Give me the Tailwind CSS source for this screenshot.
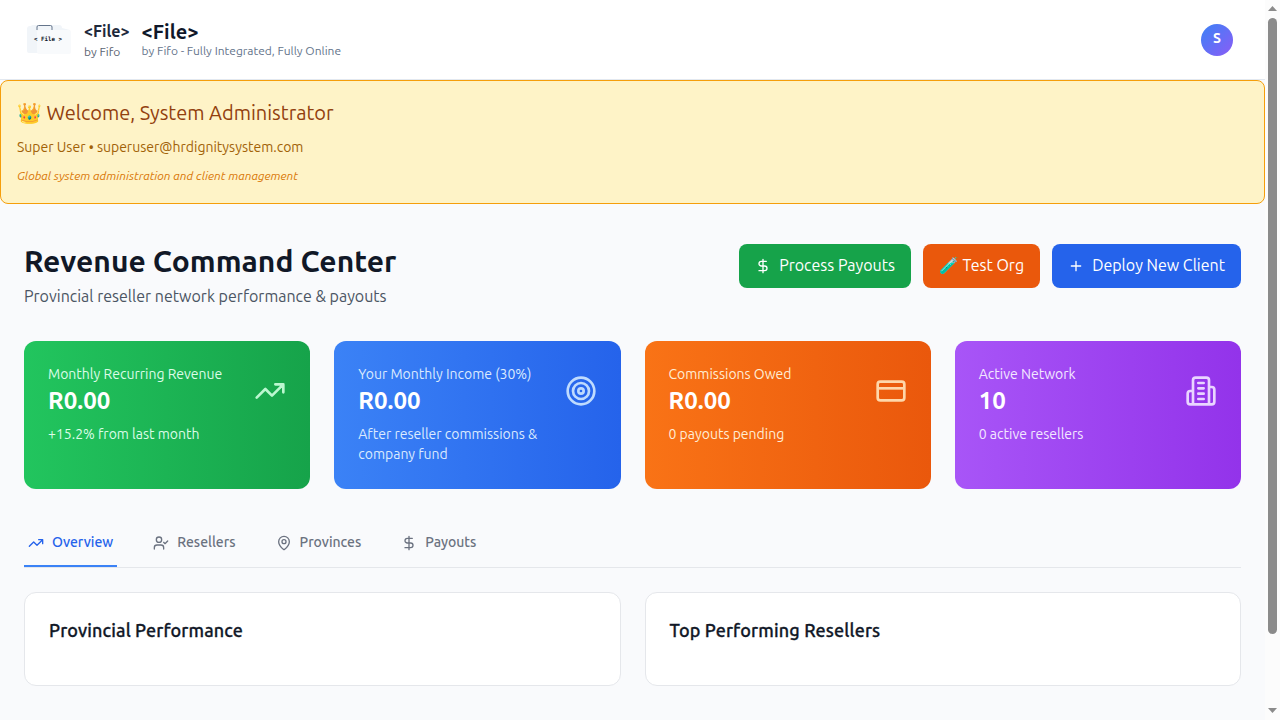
<!DOCTYPE html>
<html lang="en">
<head>
<meta charset="utf-8">
<title>Revenue Command Center</title>
<script src="https://cdn.jsdelivr.net/npm/@tailwindcss/browser@4"></script>
</head>
<body class="flex h-[720px] w-[1280px] overflow-hidden bg-[#f9fafb] font-[Ubuntu,'Noto_Sans',sans-serif] text-gray-900">
<div class="w-[1265px] shrink-0 bg-[#f9fafc]">
  <header class="flex h-20 items-center justify-between border-b border-[#e2e8f0] bg-white pl-6 pr-8">
    <div class="flex items-center">
      <svg class="h-12 w-12" viewBox="0 0 48 48" fill="none">
        <path d="M3 13q0-3 3-3h1l1-1h27q3 0 3 3l8 2v21q0 2-2 2H5q-2 0-2-2z" fill="#f1f5f9"/>
        <path d="M13 15l2-1h30q2 0 2 2v20q0 2-2 2H15q-2 0-2-2z" fill="#f8fafc"/>
        <path d="M13 14v-3q0-1.500 1.500-1.500h12q1.500 0 1.500 1.500v3" stroke="#64748b" stroke-width="1"/>
        <text x="24" y="25" text-anchor="middle" font-family="DejaVu Sans Mono, monospace" font-weight="700" font-size="5.800" fill="#0f172a">&lt; File &gt;</text>
      </svg>
      <div class="ml-3 pt-[2px]">
        <div class="text-[16px] font-bold leading-[20px] text-[#1e293b]">&lt;File&gt;</div>
        <div class="mt-[2px] text-xs leading-[18px] text-[#5b6472]">by Fifo</div>
      </div>
      <div class="ml-3 pb-[2px]">
        <div class="text-xl font-bold leading-6 text-[#0f172a]">&lt;File&gt;</div>
        <div class="text-xs leading-[14px] text-[#64748b]">by Fifo - Fully Integrated, Fully Online</div>
      </div>
    </div>
    <div class="flex size-8 items-center justify-center rounded-full bg-[linear-gradient(135deg,#3b82f6,#8b5cf6)] pb-1 text-sm font-bold text-white">S</div>
  </header>

  <section class="h-[124px] rounded-lg border border-[#f59e0b] bg-[#fef3c7] p-4">
    <h2 class="text-xl leading-8 text-[#92400e]">👑 Welcome, System Administrator</h2>
    <p class="mt-2 text-sm leading-5 text-[#a16207]">Super User • superuser@hrdignitysystem.com</p>
    <p class="mt-[10px] text-xs italic leading-[18px] text-[#d97706]">Global system administration and client management</p>
  </section>

  <main class="px-6 pt-10">
    <div class="flex h-16 items-start justify-between">
      <div class="-mt-px">
        <h1 class="text-3xl font-bold text-[#111827]">Revenue Command Center</h1>
        <p class="mt-[5px] text-base text-[#4b5563]">Provincial reseller network performance &amp; payouts</p>
      </div>
      <div class="flex gap-3 text-white">
        <button class="flex h-11 items-center gap-2 rounded-lg bg-[#16a34a] px-4">
          <svg class="size-4" viewBox="0 0 24 24" fill="none" stroke="currentColor" stroke-width="2" stroke-linecap="round" stroke-linejoin="round"><path d="M12 2v20M17 5H9.500a3.500 3.500 0 0 0 0 7h5a3.500 3.500 0 0 1 0 7H6"/></svg><span class="pb-[2px]">Process Payouts</span></button>
        <button class="flex h-11 items-center rounded-lg bg-[#ea580c] px-4 pb-[2px]">🧪 Test Org</button>
        <button class="flex h-11 items-center gap-2 rounded-lg bg-[#2563eb] px-4">
          <svg class="size-4" viewBox="0 0 24 24" fill="none" stroke="currentColor" stroke-width="2" stroke-linecap="round" stroke-linejoin="round"><path d="M5 12h14M12 5v14"/></svg><span class="pb-[2px]">Deploy New Client</span></button>
      </div>
    </div>

    <div class="mt-[33px] grid h-[148px] grid-cols-4 gap-6 text-sm">
      <div class="rounded-xl bg-[linear-gradient(to_right,#22c55e,#16a34a)] p-6 text-[#dcfce7]">
        <div class="flex items-center justify-between">
          <div><p class="-mt-px mb-px">Monthly Recurring Revenue</p><p class="text-2xl font-bold text-white">R0.00</p></div>
          <svg class="size-8 text-[#bbf7d0]" viewBox="0 0 24 24" fill="none" stroke="currentColor" stroke-width="2" stroke-linecap="round" stroke-linejoin="round"><path d="M22 7l-8.500 8.500-5-5L2 17M16 7h6v6"/></svg>
        </div>
        <p class="mt-[7px]">+15.2% from last month</p>
      </div>
      <div class="rounded-xl bg-[linear-gradient(to_right,#3b82f6,#2563eb)] p-6 text-[#dbeafe]">
        <div class="flex items-center justify-between">
          <div><p class="-mt-px mb-px">Your Monthly Income (30%)</p><p class="text-2xl font-bold text-white">R0.00</p></div>
          <svg class="size-8 text-[#bfdbfe]" viewBox="0 0 24 24" fill="none" stroke="currentColor" stroke-width="2"><circle cx="12" cy="12" r="10"/><circle cx="12" cy="12" r="6"/><circle cx="12" cy="12" r="2"/></svg>
        </div>
        <p class="mt-[7px]">After reseller commissions &amp; company fund</p>
      </div>
      <div class="rounded-xl bg-[linear-gradient(to_right,#f97316,#ea580c)] p-6 text-[#ffedd5]">
        <div class="flex items-center justify-between">
          <div><p class="-mt-px mb-px">Commissions Owed</p><p class="text-2xl font-bold text-white">R0.00</p></div>
          <svg class="size-8 text-[#fed7aa]" viewBox="0 0 24 24" fill="none" stroke="currentColor" stroke-width="2"><rect x="2" y="5" width="20" height="14" rx="2"/><path d="M2 10h20"/></svg>
        </div>
        <p class="mt-[7px]">0 payouts pending</p>
      </div>
      <div class="rounded-xl bg-[linear-gradient(to_right,#a855f7,#9333ea)] p-6 text-[#f3e8ff]">
        <div class="flex items-center justify-between">
          <div><p class="-mt-px mb-px">Active Network</p><p class="text-2xl font-bold text-white">10</p></div>
          <svg class="size-8 text-[#e9d5ff]" viewBox="0 0 24 24" fill="none" stroke="currentColor" stroke-width="2" stroke-linecap="round" stroke-linejoin="round"><path d="M6 22V4a2 2 0 0 1 2-2h8a2 2 0 0 1 2 2v18ZM6 12H4a2 2 0 0 0-2 2v6a2 2 0 0 0 2 2h2M18 9h2a2 2 0 0 1 2 2v9a2 2 0 0 1-2 2h-2M10 6h4M10 10h4M10 14h4M10 18h4"/></svg>
        </div>
        <p class="mt-[7px]">0 active resellers</p>
      </div>
    </div>

    <nav class="mt-7 flex h-[51px] items-end gap-8 border-b border-[#e5e7eb] text-sm font-medium text-[#6b7280]">
      <div class="flex h-12 items-center gap-2 border-b-2 border-[#3b82f6] px-1 text-[#2563eb]"><svg class="size-4 translate-y-px" viewBox="0 0 24 24" fill="none" stroke="currentColor" stroke-width="2" stroke-linecap="round" stroke-linejoin="round"><path d="M22 7l-8.500 8.500-5-5L2 17M16 7h6v6"/></svg>Overview</div>
      <div class="flex h-12 items-center gap-2 border-b-2 border-transparent px-1"><svg class="size-4 translate-y-px" viewBox="0 0 24 24" fill="none" stroke="currentColor" stroke-width="2" stroke-linecap="round" stroke-linejoin="round"><path d="M16 21v-2a4 4 0 0 0-4-4H6a4 4 0 0 0-4 4v2M16 11l2 2 4-4"/><circle cx="9" cy="7" r="4"/></svg>Resellers</div>
      <div class="flex h-12 items-center gap-2 border-b-2 border-transparent px-1"><svg class="size-4 translate-y-px" viewBox="0 0 24 24" fill="none" stroke="currentColor" stroke-width="2" stroke-linecap="round" stroke-linejoin="round"><path d="M20 10c0 4.993-5.539 10.193-7.399 11.799a1 1 0 0 1-1.202 0C9.539 20.193 4 14.993 4 10a8 8 0 0 1 16 0"/><circle cx="12" cy="10" r="3"/></svg>Provinces</div>
      <div class="flex h-12 items-center gap-2 border-b-2 border-transparent px-1"><svg class="size-4 translate-y-px" viewBox="0 0 24 24" fill="none" stroke="currentColor" stroke-width="2" stroke-linecap="round" stroke-linejoin="round"><path d="M12 2v20M17 5H9.500a3.500 3.500 0 0 0 0 7h5a3.500 3.500 0 0 1 0 7H6"/></svg>Payouts</div>
    </nav>

    <div class="mt-6 grid grid-cols-2 gap-6">
      <div class="h-[94px] rounded-xl border border-[#e5e7eb] bg-white px-6 pt-[23px]"><h3 class="text-lg font-medium tracking-[0.13px] text-[#111827] [-webkit-text-stroke:0.3px_#111827]">Provincial Performance</h3></div>
      <div class="h-[94px] rounded-xl border border-[#e5e7eb] bg-white px-6 pt-[23px]"><h3 class="text-lg font-medium tracking-[0.13px] text-[#111827] [-webkit-text-stroke:0.3px_#111827]">Top Performing Resellers</h3></div>
    </div>
  </main>
</div>

<!-- Scrollbar -->
<div class="flex w-[15px] shrink-0 flex-col items-center bg-[#fcfcfc]">
  <svg class="h-[18px] w-[15px]" viewBox="0 0 15 18" fill="#8b8b8b"><path d="M3 11l4.500-5 4.500 5z"/></svg>
  <div class="h-[616px] w-[9px] rounded-full bg-[#8b8b8b]"></div>
  <svg class="mt-auto h-[14px] w-[15px]" viewBox="0 0 15 14" fill="#8b8b8b"><path d="M3 2h9l-4.500 5z"/></svg>
</div>
</body>
</html>
